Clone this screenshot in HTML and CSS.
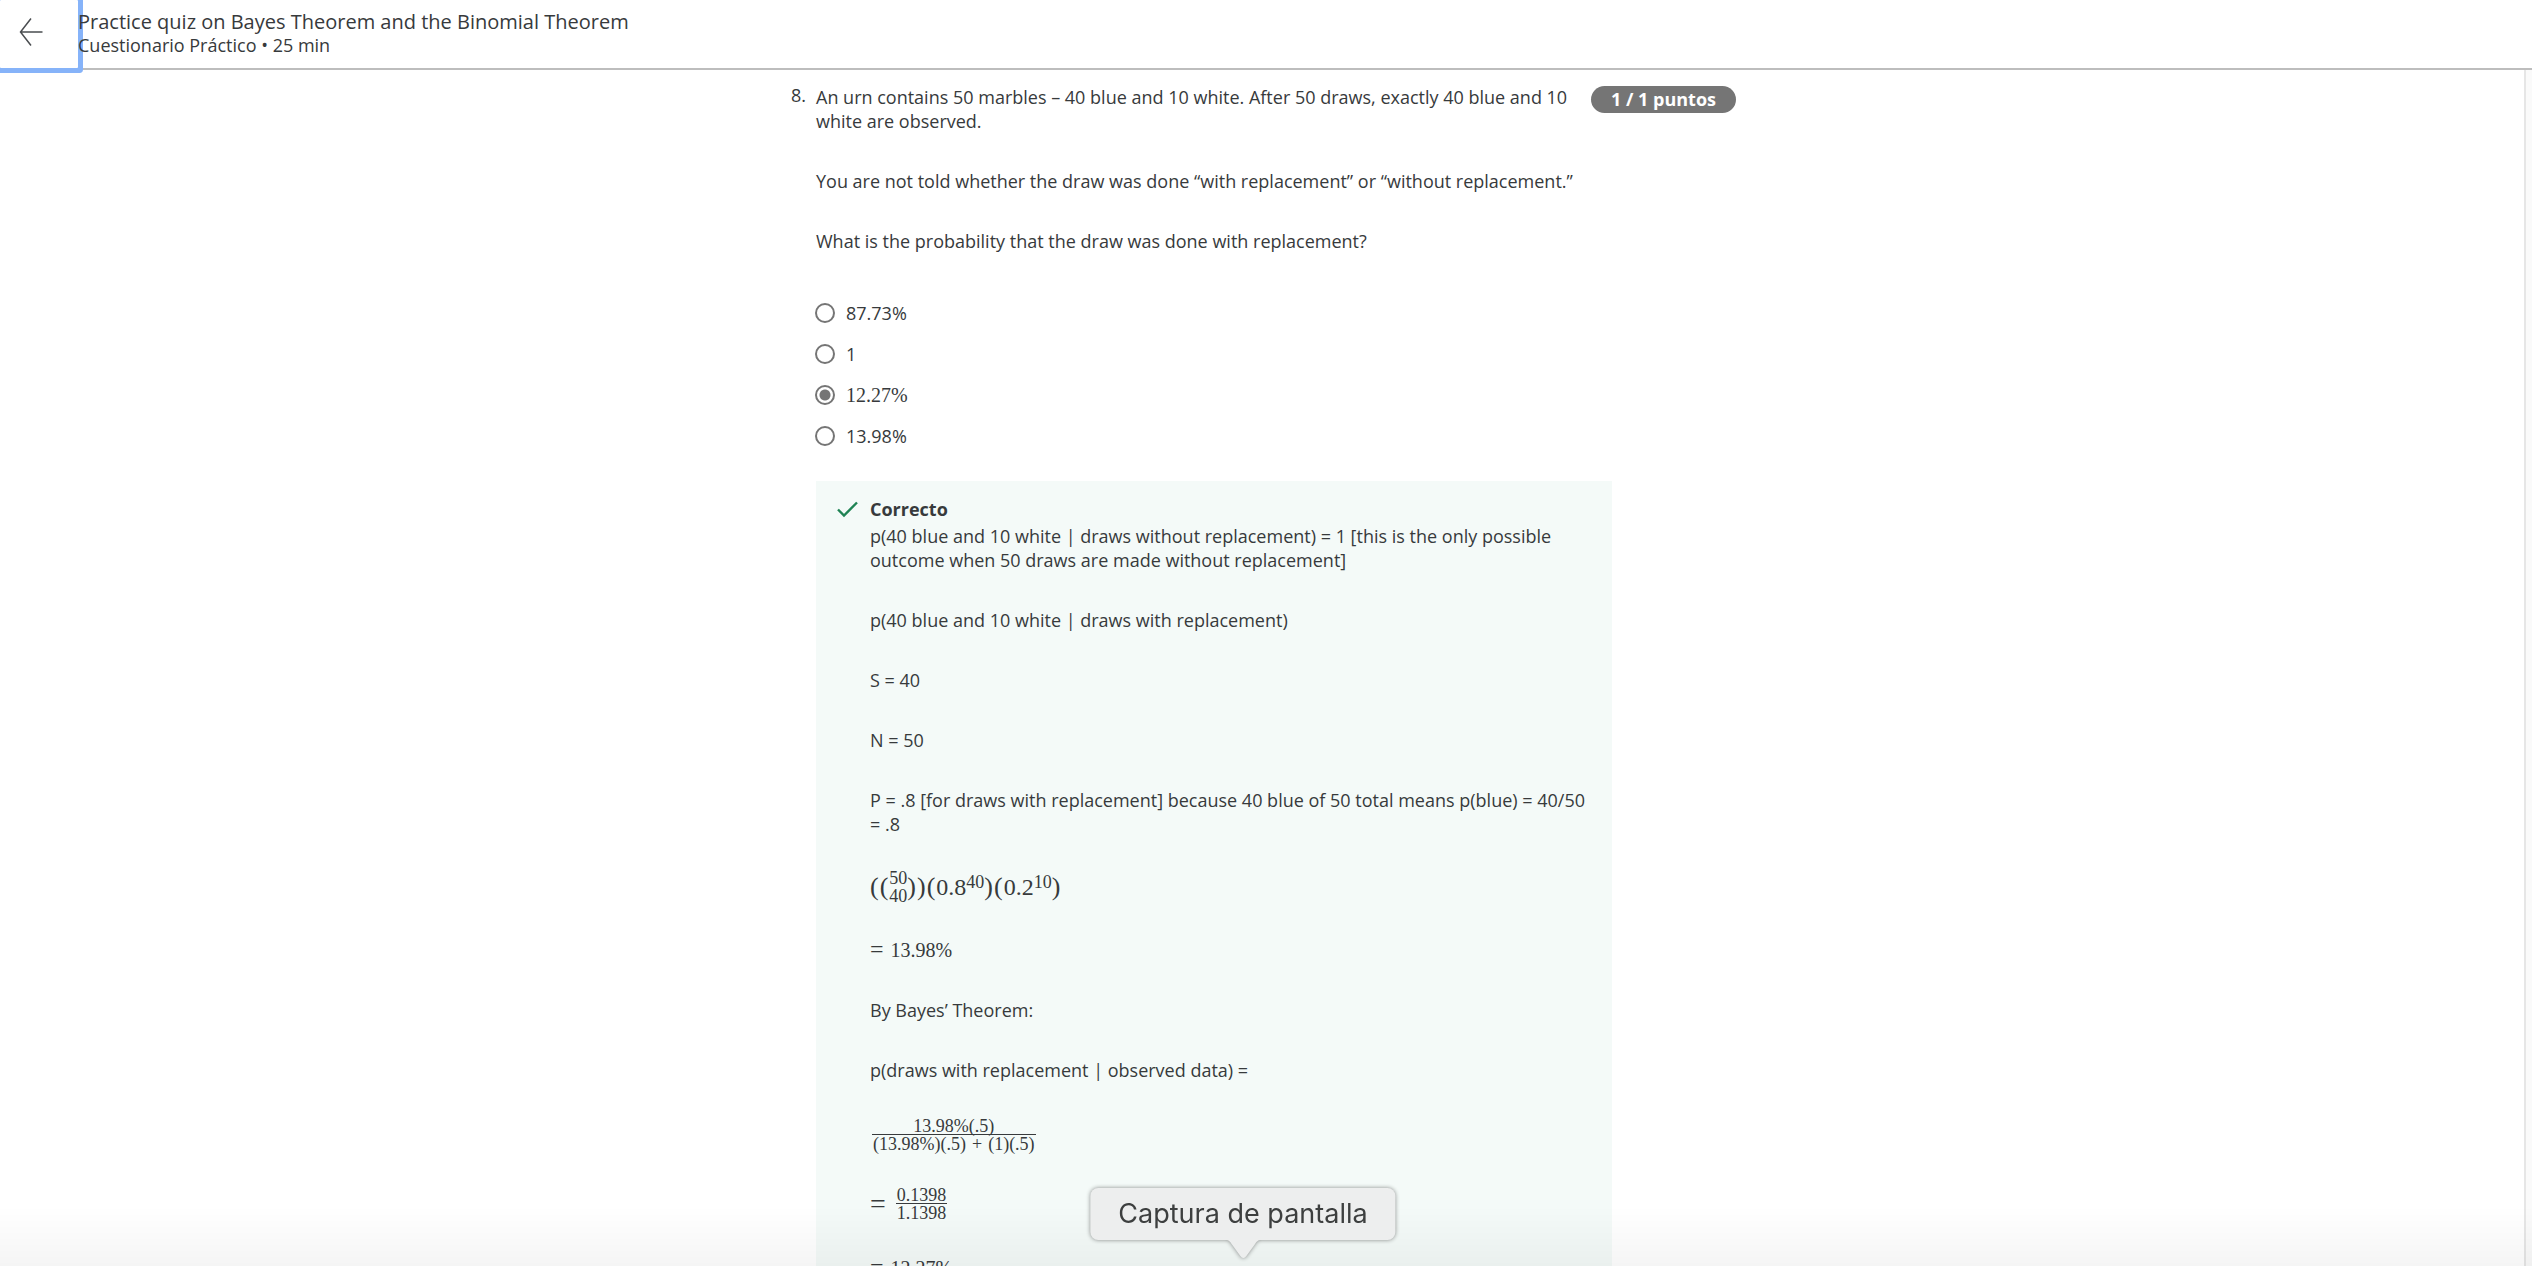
FILE: index.html
```html
<!DOCTYPE html>
<html lang="es">
<head>
<meta charset="utf-8">
<meta name="viewport" content="width=device-width, initial-scale=1">
<title>Practice quiz on Bayes Theorem and the Binomial Theorem</title>
<link rel="stylesheet" href="styles.css">
</head>
<body>
<header class="topbar">
  <button class="back" type="button" aria-label="Atrás">
    <svg width="24" height="30" viewBox="0 0 24 30" fill="none" stroke="#4a4d50" stroke-width="1.500"><path d="M23.500 15H1.500M12 1.500 1.500 15 12 28.500"/></svg>
  </button>
  <div class="heading">
    <h1 class="title">Practice quiz on Bayes Theorem and the Binomial Theorem</h1>
    <p class="subtitle">Cuestionario Práctico • 25 min</p>
  </div>
</header>
<div class="viewport">
  <main class="page">
    <section class="question">
      <span class="number">8.</span>
      <div class="prompt">
        <p>An urn contains 50 marbles – 40 blue and 10 white. After 50 draws, exactly 40 blue and 10 white are observed.</p>
        <p>You are not told whether the draw was done “with replacement” or “without replacement.”</p>
        <p>What is the probability that the draw was done with replacement?</p>
      </div>
      <span class="points">1 / 1 puntos</span>
      <div class="answer">
        <div class="options">
          <label class="option"><input type="radio" name="q8"><span>87.73%</span></label>
          <label class="option"><input type="radio" name="q8"><span>1</span></label>
          <label class="option"><input type="radio" name="q8" checked><span class="math">12.27%</span></label>
          <label class="option"><input type="radio" name="q8"><span>13.98%</span></label>
        </div>
        <div class="feedback">
          <svg class="check" width="21" height="17" viewBox="0 0 21 17" fill="none" stroke="#1f8354" stroke-width="2.400"><path d="M1 8.500 7 14.500 20 1.500"/></svg>
          <div>
            <h2 class="verdict">Correcto</h2>
            <div class="explanation">
              <p>p(40 blue and 10 white | draws without replacement) = 1 [this is the only possible outcome when 50 draws are made without replacement]</p>
              <p>p(40 blue and 10 white | draws with replacement)</p>
              <p>S = 40</p>
              <p>N = 50</p>
              <p>P = .8 [for draws with replacement] because 40 blue of 50 total means p(blue) = 40/50 = .8</p>
              <div class="math formula">
                <span class="paren">(</span><span class="paren">(</span><span class="stack"><span>50</span><span>40</span></span><span class="paren">)</span><span class="paren">)</span><span class="paren">(</span><span>0.8<sup>40</sup></span><span class="paren">)</span><span class="paren">(</span><span>0.2<sup>10</sup></span><span class="paren">)</span>
              </div>
              <p class="math"><span class="relation">=</span> 13.98%</p>
              <p>By Bayes’ Theorem:</p>
              <p>p(draws with replacement | observed data) =</p>
              <div class="math equation">
                <span class="fraction"><span>13.98%(.5)</span><span class="denominator">(13.98%)(.5)<span class="plus">+</span>(1)(.5)</span></span>
              </div>
              <div class="math equation">
                <span class="equals">=</span><span class="fraction"><span>0.1398</span><span class="denominator">1.1398</span></span>
              </div>
              <p class="math"><span class="relation">=</span> 12.27%</p>
            </div>
          </div>
        </div>
      </div>
    </section>
  </main>
  <div class="track"></div>
</div>
<div class="shade"></div>
<div class="tooltip" role="tooltip">Captura de pantalla
  <svg class="tail" width="36" height="20" viewBox="0 0 36 20"><path d="M0 0H36C32 0 31 2 29 5L21 16Q18 20 15 16L7 5C5 2 4 0 0 0Z" fill="#edeeee"/></svg>
</div>
</body>
</html>
```
FILE: styles.css
```css
* { box-sizing: border-box; }
body {
  margin: 0;
  height: 100vh;
  overflow: hidden;
  display: flex;
  flex-direction: column;
  background: #fff;
  color: #373a3c;
  font: 18px/24px "Open Sans", sans-serif;
}
h1, h2, p { margin: 0; }

.topbar {
  display: flex;
  flex: none;
  height: 70px;
  border-bottom: 2px solid #bdbdbd;
}
.back {
  width: 78px;
  height: 68px;
  padding: 0 0 4px 19px;
  display: flex;
  align-items: center;
  border: 0;
  background: #fff;
  box-shadow: 0 0 0 5px #86b3f9;
  border-radius: 1px;
}
.heading { padding-top: 8px; z-index: 1; }
.title { font-size: 20px; line-height: 28px; font-weight: 400; }
.subtitle { line-height: 18px; }

.viewport { display: flex; flex: 1; min-height: 0; overflow: hidden; }
.page { flex: 1; padding-left: 3px; }
.track { width: 8px; background: #fafafa; border-left: 2px solid #e6e6e6; }

.question {
  max-width: 945px;
  margin: 0 auto;
  padding-top: 15px;
  display: grid;
  grid-template-columns: 25px 1fr auto;
}
.number { line-height: 20px; }
.prompt { display: grid; gap: 36px; padding-right: 16px; }
.points {
  align-self: start;
  margin-top: 1px;
  padding: 0 20px;
  border-radius: 14px;
  background: #757575;
  color: #fff;
  font-weight: 700;
  line-height: 27px;
}
.answer { grid-column: 2 / 4; padding: 48px 124px 0 0; }

.options { display: grid; gap: 17px; margin-left: -1px; }
.option { display: flex; align-items: center; gap: 11px; }
.option input {
  appearance: none;
  width: 20px;
  height: 20px;
  margin: 0;
  border: 2px solid #757575;
  border-radius: 50%;
}
.option input:checked {
  background: radial-gradient(circle, #757575 5px, transparent 6px);
}

.feedback {
  display: flex;
  gap: 12px;
  margin-top: 33px;
  padding: 16px 24px 24px 21px;
  background: #f4faf8;
}
.check { flex: none; margin-top: 4px; }
.explanation { display: grid; gap: 36px; }
.verdict { font-size: 18px; font-weight: 700; line-height: 24px; margin-bottom: 3px; }

.math { font-family: "Liberation Serif", serif; font-size: 20px; }
.relation { font-size: 24px; line-height: 0; margin-right: 2px; }
.formula { display: flex; align-items: center; font-size: 24px; line-height: 30px; }
.formula sup { font-size: 18px; line-height: 0; vertical-align: 7px; }
.paren { font-size: 26px; padding-right: 1px; }
.stack { display: grid; font-size: 18px; line-height: 18px; margin: -3px 0; }
.equation { display: flex; align-items: center; gap: 8px; margin-bottom: -1px; }
.equals { font-size: 28px; }
.fraction { display: grid; text-align: center; font-size: 18px; line-height: 16px; margin-left: 2px; }
.denominator { border-top: 1px solid #373a3c; padding: 1px 1px 0; }
.plus { margin: 0 6px; }

.shade {
  position: fixed;
  inset: auto 0 0;
  height: 60px;
  background: linear-gradient(transparent, rgba(0, 0, 0, 0.04));
}
.tooltip {
  position: fixed;
  left: calc(50% - 23px);
  bottom: 26px;
  transform: translateX(-50%);
  padding: 0 28px;
  border-radius: 8px;
  background: #edeeee;
  color: #3d3f3f;
  font: 27px/52px Inter, sans-serif;
  white-space: nowrap;
  filter: drop-shadow(0 0 2px rgba(0, 0, 0, 0.45));
}
.tail { position: absolute; top: 100%; left: calc(50% - 18px); }
```
